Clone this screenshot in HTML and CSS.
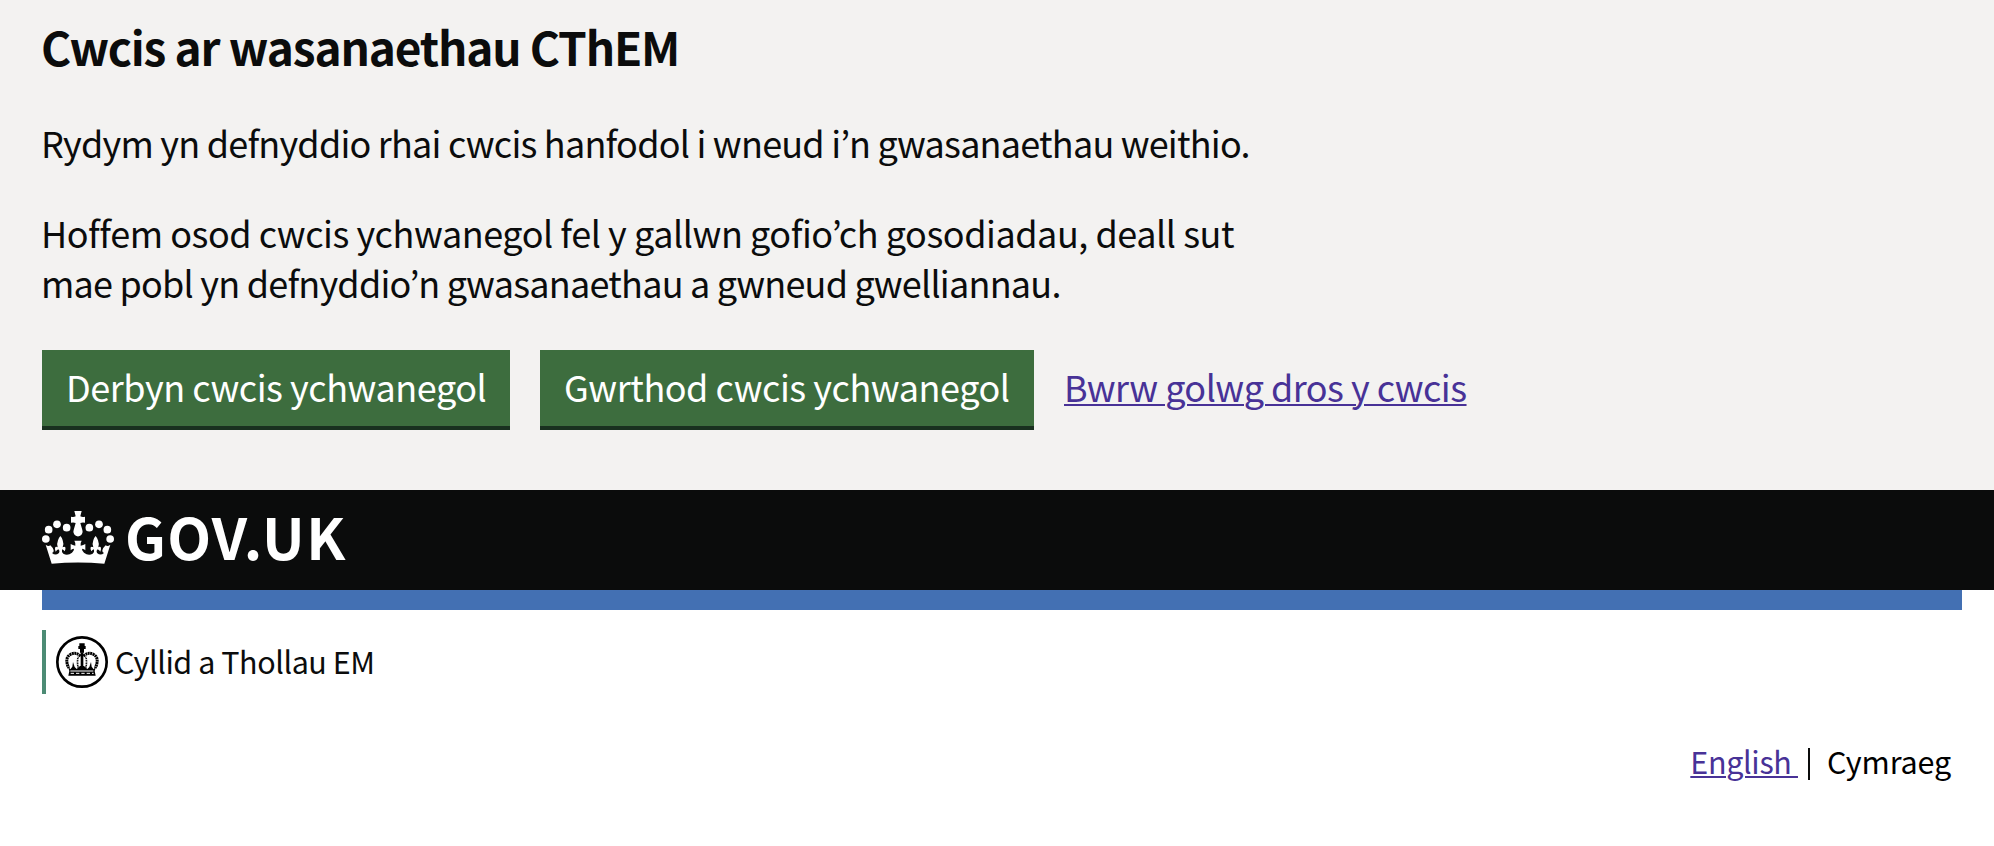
FILE: index.html
```html
<!DOCTYPE html>
<html lang="cy">
<head>
<meta charset="utf-8">
<title>GOV.UK</title>
<link rel="stylesheet" href="styles.css">
</head>
<body>
<section class="cookie-banner">
  <h2 class="cookie-title">Cwcis ar wasanaethau CThEM</h2>
  <p class="cookie-text">Rydym yn defnyddio rhai cwcis hanfodol i wneud i’n gwasanaethau weithio.</p>
  <p class="cookie-text"><span class="line-two">Hoffem osod cwcis ychwanegol fel y gallwn gofio’ch gosodiadau, deall sut</span><br>mae pobl yn defnyddio’n gwasanaethau a gwneud gwelliannau.</p>
  <div class="cookie-actions">
    <button class="button accept" type="button">Derbyn cwcis ychwanegol</button>
    <button class="button reject" type="button">Gwrthod cwcis ychwanegol</button>
    <a class="link cookie-link" href="#">Bwrw golwg dros y cwcis</a>
  </div>
</section>
<header class="header">
  <a class="logo" href="#">
    <svg class="crown" viewBox="36 33 216 159" fill="#fff">
      <circle cx="47.500" cy="117" r="11.500"/><circle cx="56" cy="89" r="11.500"/><circle cx="81" cy="73" r="11.500"/><circle cx="110" cy="83" r="11.500"/>
      <circle cx="240.500" cy="117" r="11.500"/><circle cx="232" cy="89" r="11.500"/><circle cx="207" cy="73" r="11.500"/><circle cx="178" cy="83" r="11.500"/>
      <path d="M133 33H155L151 49Q157 52 165 50V68Q157 66 151 69L157 90A14 14 0 1 1 131 90L137 69Q131 66 123 68V50Q131 52 137 49Z"/>
      <path d="M47 134Q55 141 61 136Q68 142 71 151Q72 158 66 159Q76 168 86 160Q91 153 85 148Q80 150 77 155Q73 147 76 141Q80 139 83 142Q80 130 84 121Q86 114 91 108Q97 114 98 121Q102 130 98 142Q103 139 106 142Q108 148 104 154Q101 149 96 148Q94 156 100 161Q113 168 126 158Q133 151 132 146Q125 147 122 151V132Q128 136 136 137Q138 130 133 122H155Q150 130 152 137Q160 136 166 132V151Q163 147 156 146Q155 151 162 158Q175 168 188 161Q194 156 192 148Q187 149 184 154Q180 148 182 142Q185 139 190 142Q186 130 190 121Q191 114 197 108Q202 114 204 121Q208 130 205 142Q208 139 212 141Q215 147 211 155Q208 150 203 148Q197 153 202 160Q212 168 222 159Q216 158 217 151Q220 142 227 136Q233 141 241 134L223 191Q144 184 65 191Z"/>
    </svg>
    <span class="logo-text">GOV.UK</span>
  </a>
</header>
<main class="page">
  <div class="organisation">
    <svg class="crest" viewBox="0 0 156 156">
      <circle cx="78" cy="78" r="74" fill="none" stroke="#000" stroke-width="8"/>
      <path d="M70 22H86V30H89V39H84V50H72V39H67V30H70Z"/>
      <path d="M74 49H82V116H74Z"/>
      <path fill="none" stroke="#000" stroke-width="9" stroke-dasharray="6 1.500" d="M74 60Q58 46 42 56Q25 67 38 96M82 60Q98 46 114 56Q131 67 118 96"/>
      <path fill="none" stroke="#000" stroke-width="5" stroke-dasharray="3 2" d="M67 62Q62 76 67 97M89 62Q94 76 89 97"/>
      <path d="M35 89L43 100L49 92L51 78L56 93L62 99L72 90H84L94 99L100 93L105 78L107 92L113 100L121 89L116 105L119 119H37L40 105Z"/>
      <path stroke="#fff" stroke-width="3" d="M43 105H112"/>
      <path fill="none" stroke="#fff" stroke-width="3" stroke-dasharray="10 6" d="M44 112H113"/>
    </svg>
    <span class="organisation-name">Cyllid a Thollau EM</span>
  </div>
  <nav class="languages">
    <a class="link english" href="#">English&nbsp;</a>
    <span class="current-language">Cymraeg</span>
  </nav>
</main>
</body>
</html>
```
FILE: styles.css
```css
* { box-sizing: border-box; }
body {
  min-height: 846px;
  margin: 0;
  background: #fff;
  color: #0b0c0c;
  font-family: "Noto Sans CJK JP", "Noto Sans", sans-serif;
  font-size: 36px;
  line-height: 50px;
}
.cookie-banner {
  height: 490px;
  padding: 16px 42px 0 41px;
  background: #f3f2f1;
}
.cookie-title { margin: 0 0 41px; font-size: 46px; line-height: 60px; font-weight: 700; letter-spacing: -1.15px; }
.cookie-text { margin: 0 0 40px; white-space: nowrap; letter-spacing: -0.78px; }
.line-two { letter-spacing: -0.46px; }
.cookie-actions { display: flex; gap: 30px; margin: 43px 0 0 1px; }
.button {
  height: 80px;
  padding: 0 0 4px 24px;
  border: 0;
  border-bottom: 4px solid #19301f;
  background: #3d6d3e;
  color: #fff;
  font: inherit;
  letter-spacing: -0.46px;
  text-align: left;
  white-space: nowrap;
}
.accept { width: 468px; }
.reject { width: 494px; }
.link { color: #483297; text-decoration-thickness: 2px; text-underline-offset: 2px; }
.cookie-link { margin-top: 11px; white-space: nowrap; letter-spacing: -0.53px; }
.header { height: 100px; padding: 21px 42px 0; background: #0b0c0c; }
.logo { display: flex; color: #fff; text-decoration: none; }
.crown { width: 72px; height: 53px; }
.logo-text { margin-left: 11px; font-size: 57px; line-height: 48px; font-weight: 700; letter-spacing: 1.4px; }
.page { margin: 0 32px 0 42px; border-top: 20px solid #4370b3; padding-top: 20px; }
.organisation { display: flex; height: 64px; padding: 6px 0 0 10px; border-left: 4px solid #4c8b74; }
.crest { width: 52px; height: 52px; }
.organisation-name { margin-left: 7px; font-size: 30.5px; line-height: 50px; letter-spacing: -0.45px; }
.languages { display: flex; justify-content: flex-end; padding: 54px 11px 0 0; font-size: 30.5px; line-height: 26px; }
.english { letter-spacing: -0.35px; }
.current-language { height: 32px; margin-left: 10px; padding-left: 17px; border-left: 2px solid #0b0c0c; color: #000; letter-spacing: -0.15px; }
```
